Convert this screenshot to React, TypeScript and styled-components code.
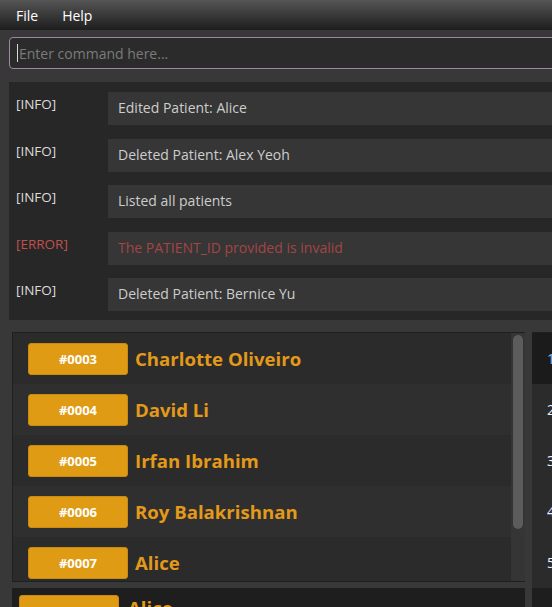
import React from "react";
import styled, { createGlobalStyle } from "styled-components";

const Global = createGlobalStyle`
  html, body { margin: 0; padding: 0; background: #383838; overflow: hidden; }
  body { width: 552px; height: 607px; }
  * { box-sizing: border-box; }
`;

const FONT = `"Open Sans", "Noto Sans", sans-serif`;

const Shell = styled.div`
  width: 580px;
  height: 607px;
  background: #383838;
  font-family: ${FONT};
  display: flex;
  flex-direction: column;
  overflow: hidden;
`;

const MenuBar = styled.div`
  height: 30px;
  flex: none;
  display: flex;
  align-items: center;
  gap: 24px;
  padding-left: 16px;
  background: linear-gradient(#555555, #1d1d1d);
`;

const MenuItem = styled.span`
  color: #ffffff;
  font-size: 14px;
`;

const CommandWrap = styled.div`
  padding: 7px 0 0 9px;
  flex: none;
`;

const CommandBox = styled.div`
  height: 32px;
  border: 1.5px solid #a284a6;
  border-radius: 4px;
  background: #2b2b2b;
  display: flex;
  align-items: center;
  padding-left: 7px;
`;

const Caret = styled.span`
  width: 1px;
  height: 18px;
  background: #d8d8d8;
  margin-right: 1px;
`;

const Placeholder = styled.span`
  color: #7b7b7b;
  font-size: 14px;
`;

const ResultPanel = styled.div`
  margin: 13px 0 0 9px;
  height: 238px;
  flex: none;
  background: #272727;
  padding-top: 10px;
  display: flex;
  flex-direction: column;
  gap: 13.5px;
`;

const LogRow = styled.div`
  display: flex;
  height: 33px;
`;

const LogLabel = styled.span<{ $error?: boolean }>`
  width: 99px;
  flex: none;
  padding: 3px 0 0 7px;
  font-size: 13.5px;
  color: ${(p) => (p.$error ? "#c0504d" : "#dcdcdc")};
`;

const LogMessage = styled.div<{ $error?: boolean }>`
  flex: 1;
  background: #363636;
  display: flex;
  align-items: center;
  padding: 0 0 2px 10px;
  font-size: 14px;
  color: ${(p) => (p.$error ? "#a44545" : "#cdcdcd")};
`;

const Lower = styled.div`
  margin-top: 12px;
  display: flex;
  flex-direction: column;
  gap: 6px;
  flex: none;
`;

const Split = styled.div`
  display: flex;
  gap: 7px;
  padding-left: 12px;
`;

const ListPanel = styled.div`
  width: 513px;
  height: 250px;
  flex: none;
  display: flex;
  border: 1px solid #1f1f1f;
  border-right: none;
  overflow: hidden;
`;

const ListBody = styled.div`
  flex: 1;
  display: flex;
  flex-direction: column;
`;

const PatientRow = styled.div<{ $alt?: boolean }>`
  height: 51px;
  flex: none;
  display: flex;
  align-items: center;
  padding-left: 15px;
  gap: 7px;
  background: ${(p) => (p.$alt ? "#2f2f2f" : "#2b2b2b")};
`;

const Badge = styled.span`
  width: 100px;
  height: 32px;
  flex: none;
  background: #e09b14;
  border: 1px solid #c98a10;
  border-radius: 3px;
  color: #ffffff;
  font-weight: 700;
  font-size: 13px;
  display: flex;
  align-items: center;
  justify-content: center;
`;

const PatientName = styled.span`
  color: #e3991a;
  font-weight: 700;
  font-size: 18.6px;
  white-space: nowrap;
`;

const ScrollTrack = styled.div`
  width: 14px;
  flex: none;
  background: #353535;
  padding: 2px 2px 0 2px;
`;

const ScrollThumb = styled.div`
  width: 10px;
  height: 194px;
  border-radius: 5px;
  background: #5c5c5c;
`;

const SidePanel = styled.div`
  flex: 1;
  height: 250px;
  display: flex;
  flex-direction: column;
  border-top: 1px solid #1f1f1f;
`;

const SideRow = styled.div<{ $head?: boolean }>`
  height: 51px;
  flex: none;
  display: flex;
  align-items: center;
  padding-left: 15px;
  background: ${(p) => (p.$head ? "#1b1b1b" : "#2b2b2b")};
  color: ${(p) => (p.$head ? "#7fb6e8" : "#e6f2ff")};
  font-size: 14px;
`;

const BottomSplit = styled.div`
  display: flex;
  gap: 7px;
  padding-left: 12px;
`;

const BottomPanel = styled.div<{ $wide?: boolean }>`
  height: 30px;
  flex: ${(p) => (p.$wide ? "none" : "1")};
  width: ${(p) => (p.$wide ? "513px" : "auto")};
  background: #1e1e1e;
  display: flex;
  align-items: flex-start;
  padding: 7px 0 0 7px;
  gap: 9px;
  overflow: hidden;
`;

const logs = [
  { level: "INFO", msg: "Edited Patient: Alice" },
  { level: "INFO", msg: "Deleted Patient: Alex Yeoh" },
  { level: "INFO", msg: "Listed all patients" },
  { level: "ERROR", msg: "The PATIENT_ID provided is invalid" },
  { level: "INFO", msg: "Deleted Patient: Bernice Yu" },
];

const patients = [
  { id: "#0003", name: "Charlotte Oliveiro" },
  { id: "#0004", name: "David Li" },
  { id: "#0005", name: "Irfan Ibrahim" },
  { id: "#0006", name: "Roy Balakrishnan" },
  { id: "#0007", name: "Alice" },
];

export default function App() {
  return (
    <Shell>
      <Global />
      <MenuBar>
        <MenuItem>File</MenuItem>
        <MenuItem>Help</MenuItem>
      </MenuBar>
      <CommandWrap>
        <CommandBox>
          <Caret />
          <Placeholder>Enter command here...</Placeholder>
        </CommandBox>
      </CommandWrap>
      <ResultPanel>
        {logs.map((l, i) => {
          const err = l.level === "ERROR";
          return (
            <LogRow key={i}>
              <LogLabel $error={err}>[{l.level}]</LogLabel>
              <LogMessage $error={err}>{l.msg}</LogMessage>
            </LogRow>
          );
        })}
      </ResultPanel>
      <Lower>
        <Split>
          <ListPanel>
            <ListBody>
              {patients.map((p, i) => (
                <PatientRow key={p.id} $alt={i % 2 === 1}>
                  <Badge>{p.id}</Badge>
                  <PatientName>{p.name}</PatientName>
                </PatientRow>
              ))}
            </ListBody>
            <ScrollTrack>
              <ScrollThumb />
            </ScrollTrack>
          </ListPanel>
          <SidePanel>
            {[1, 2, 3, 4, 5].map((n) => (
              <SideRow key={n} $head={n === 1}>
                {n}
              </SideRow>
            ))}
          </SidePanel>
        </Split>
        <BottomSplit>
          <BottomPanel $wide>
            <Badge>#0007</Badge>
            <PatientName>Alice</PatientName>
          </BottomPanel>
          <BottomPanel />
        </BottomSplit>
      </Lower>
    </Shell>
  );
}
